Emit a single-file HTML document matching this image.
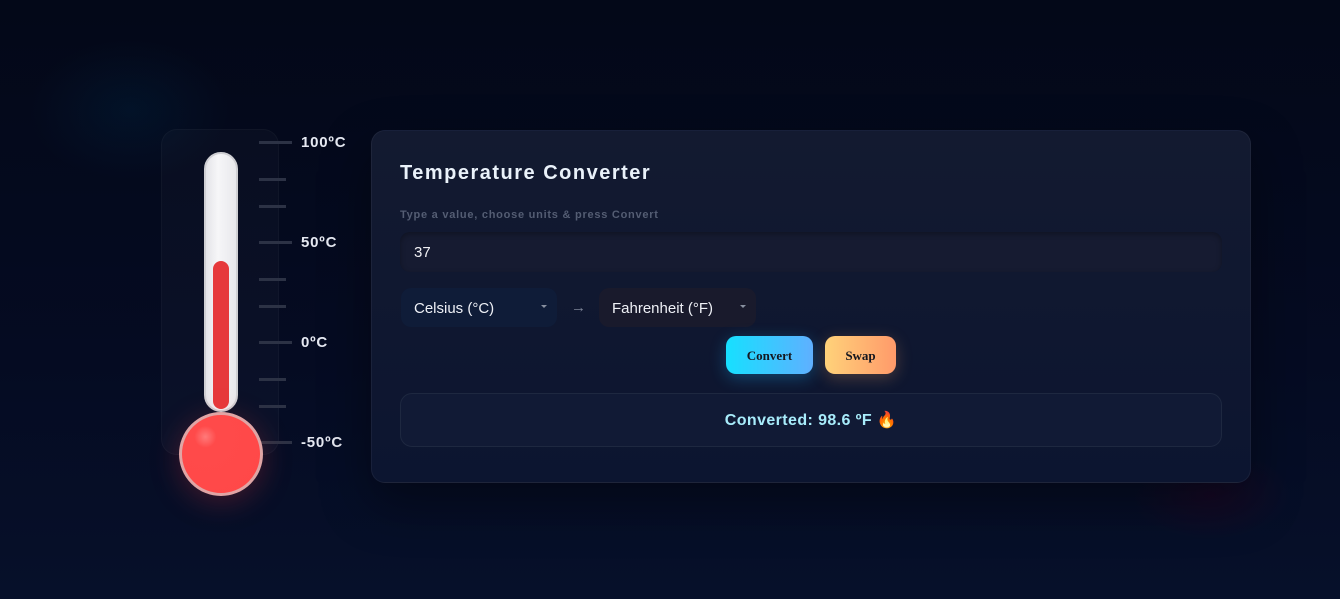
<!DOCTYPE html>
<html><head><meta charset="utf-8"><style>
*{margin:0;padding:0;box-sizing:border-box}
body{width:1340px;height:599px;overflow:hidden;position:relative;font-family:"Liberation Sans",sans-serif;
background:linear-gradient(180deg,#030818 0%,#050b22 60%,#06102a 100%);}
.glow1{position:absolute;left:30px;top:40px;width:200px;height:140px;border-radius:50%;background:radial-gradient(closest-side,rgba(0,40,70,.3),transparent);}
.glow2{position:absolute;left:1130px;top:450px;width:160px;height:90px;border-radius:50%;background:radial-gradient(closest-side,rgba(50,0,35,.35),transparent);}
.panel{position:absolute;left:161px;top:129px;width:118px;height:326px;border-radius:16px;background:rgba(255,255,255,.025);border:1px solid rgba(255,255,255,.03)}
.tube{position:absolute;left:204px;top:152px;width:34px;height:260px;border-radius:17px;background:linear-gradient(90deg,#e4e4e8,#f6f6f8 40%,#e8e8ec);border:2px solid #cfcfd3}
.fill{position:absolute;left:213px;top:261px;width:16px;height:148px;border-radius:8px;background:#e6393b}
.bulb{position:absolute;left:179px;top:412px;width:84px;height:84px;border-radius:50%;background:radial-gradient(circle at 30% 28%,#ff7a7a 0,#ff4a4a 14%,#ff4848 100%);border:3px solid #e0a5a5;box-shadow:0 6px 30px rgba(255,60,60,.25)}
.tick{position:absolute;height:3px;background:#2c3245}
.lbl{position:absolute;left:301px;color:#e6e9f2;font-weight:bold;font-size:15px;letter-spacing:.8px}
.card{position:absolute;left:371px;top:130px;width:880px;height:353px;border-radius:14px;background:linear-gradient(180deg,#131a30,#0c1530);border:1px solid rgba(255,255,255,.05);box-shadow:0 20px 50px rgba(0,0,0,.4)}
h1{position:absolute;left:400px;top:162px;font-size:20px;color:#eaf2fa;font-weight:bold;letter-spacing:1.5px}
.sub{position:absolute;left:400px;top:209px;font-size:11px;color:#545d73;font-weight:bold;letter-spacing:.75px}
.inp{position:absolute;left:400px;top:232px;width:822px;height:40px;border-radius:10px;background:#161b31;box-shadow:inset 0 2px 6px rgba(0,0,0,.3);color:#f0f0f4;font-size:15px;padding:12px 14px}
.sel{position:absolute;top:288px;height:39px;border-radius:10px;color:#eef0f6;font-size:15px;padding:12px 13px}
.sel:after{content:"";position:absolute;right:10px;top:17px;border:3px solid transparent;border-top:3px solid #8890a0}
.arr{position:absolute;left:571px;top:299px;color:#7d8496;font-size:15px}
.btn{position:absolute;top:336px;height:38px;border-radius:10px;font-family:"Liberation Serif",serif;font-weight:bold;font-size:13px;color:#15171f;text-align:center;line-height:39px}
.res{position:absolute;left:400px;top:393px;width:822px;height:54px;border-radius:12px;background:#111a35;border:1px solid #1e2840;text-align:center;line-height:54px;color:#a8ecfb;font-weight:bold;font-size:16px;letter-spacing:.4px}
</style></head><body>
<div class="glow1"></div><div class="glow2"></div>
<div class="panel"></div>
<div class="tick" style="left:259px;top:141px;width:33px"></div>
<div class="tick" style="left:259px;top:178px;width:27px"></div>
<div class="tick" style="left:259px;top:205px;width:27px"></div>
<div class="tick" style="left:259px;top:241px;width:33px"></div>
<div class="tick" style="left:259px;top:278px;width:27px"></div>
<div class="tick" style="left:259px;top:305px;width:27px"></div>
<div class="tick" style="left:259px;top:341px;width:33px"></div>
<div class="tick" style="left:259px;top:378px;width:27px"></div>
<div class="tick" style="left:259px;top:405px;width:27px"></div>
<div class="tick" style="left:259px;top:441px;width:33px"></div>
<div class="lbl" style="top:134px">100ºC</div>
<div class="lbl" style="top:234px">50ºC</div>
<div class="lbl" style="top:334px">0ºC</div>
<div class="lbl" style="top:434px">-50ºC</div>
<div class="tube"></div><div class="fill"></div><div class="bulb"></div>
<div class="card"></div>
<h1>Temperature Converter</h1>
<div class="sub">Type a value, choose units &amp; press Convert</div>
<div class="inp">37</div>
<div class="sel" style="left:401px;width:156px;background:#0f1c38">Celsius (°C)</div>
<div class="arr">→</div>
<div class="sel" style="left:599px;width:157px;background:#191a2c">Fahrenheit (°F)</div>
<div class="btn" style="left:726px;width:87px;background:linear-gradient(90deg,#16e0ff,#5fb0ff);box-shadow:0 4px 16px rgba(30,180,255,.3)">Convert</div>
<div class="btn" style="left:825px;width:71px;background:linear-gradient(90deg,#ffd27a,#ff9a6a);box-shadow:0 4px 16px rgba(255,170,100,.25)">Swap</div>
<div class="res">Converted: 98.6 ºF 🔥</div>
</body></html>
